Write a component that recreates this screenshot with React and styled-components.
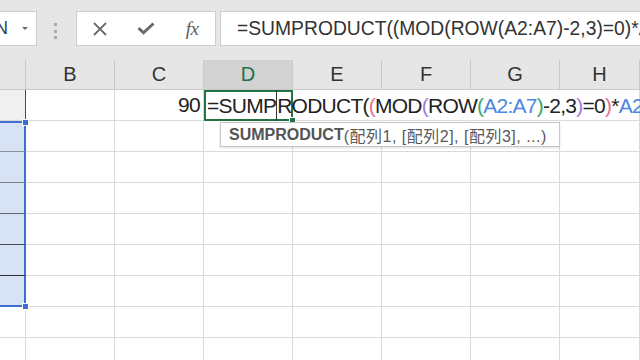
import React from "react";
import styled, { createGlobalStyle } from "styled-components";

const GlobalStyle = createGlobalStyle`
  html, body {
    margin: 0;
    padding: 0;
    width: 640px;
    height: 360px;
    overflow: hidden;
    background: #ffffff;
  }
  body {
    font-family: "Liberation Sans", "Noto Sans CJK JP", sans-serif;
  }
`;

const Page = styled.div`
  width: 640px;
  height: 360px;
  overflow: hidden;
  display: flex;
  flex-direction: column;
`;

/* ---------- formula toolbar ---------- */

const Toolbar = styled.div`
  height: 60px;
  flex-shrink: 0;
  box-sizing: border-box;
  padding-top: 11px;
  background: #e6e6e6;
  display: flex;
  align-items: flex-start;
`;

const Box = styled.div`
  height: 35px;
  box-sizing: border-box;
  background: #ffffff;
  border: 1px solid #cdcdcd;
  display: flex;
  align-items: center;
  flex-shrink: 0;
`;

const NameBox = styled(Box)`
  width: 37px;
  border-left: none;
  overflow: hidden;
  justify-content: space-between;
  padding-right: 8px;
`;

const NameText = styled.span`
  margin-left: -5px;
  font-size: 18px;
  color: #2a3f66;
`;

const DropArrow = styled.span`
  width: 0;
  height: 0;
  border-left: 3px solid transparent;
  border-right: 3px solid transparent;
  border-top: 3px solid #6a6a6a;
`;

const Grip = styled.div`
  width: 3px;
  margin: 12px 19px 0 17px;
  display: flex;
  flex-direction: column;
  gap: 3.5px;
`;

const GripDot = styled.span`
  width: 3px;
  height: 3px;
  background: #a9a9a9;
`;

const ButtonGroup = styled(Box)`
  width: 140px;
`;

const ToolButton = styled.div`
  width: 46px;
  height: 100%;
  display: flex;
  align-items: center;
  justify-content: center;
  color: #6a6a6a;
`;

const FxText = styled.span`
  font-family: "Liberation Serif", serif;
  font-style: italic;
  font-size: 19px;
  color: #5c5c5c;
  letter-spacing: -0.5px;
`;

const FormulaBox = styled(Box)`
  margin-left: 4px;
  width: 440px;
  border-right: none;
  padding-left: 16px;
  overflow: hidden;
  white-space: nowrap;
  font-size: 19.3px;
  color: #333333;
`;

/* ---------- sheet ---------- */

const Sheet = styled.div`
  display: grid;
  grid-template-columns: 26px repeat(6, 89px) 1fr;
  grid-template-rows: 30px;
  grid-auto-rows: 31px;
`;

const HeaderCell = styled.div`
  box-sizing: border-box;
  background: ${(p) => (p.$active ? "#d2d2d2" : "#e6e6e6")};
  color: ${(p) => (p.$active ? "#217346" : "#333333")};
  border-right: 1px solid #c9c9c9;
  border-bottom: 1px solid #c9c9c9;
  font-size: 20px;
  display: flex;
  align-items: center;
  justify-content: center;
`;

const Cell = styled.div`
  box-sizing: border-box;
  background: #ffffff;
  border-right: 1px solid ${(p) => (p.$noLine ? "#ffffff" : "#dadada")};
  border-bottom: 1px solid #dadada;
  display: flex;
  align-items: center;
  justify-content: ${(p) => (p.$right ? "flex-end" : "flex-start")};
  padding: 0 3px;
  font-size: 21px;
  letter-spacing: -0.7px;
  color: #222222;
`;

const CornerCell = styled(Cell)`
  background: #f0f0f0;
  border-right: 1px solid #4a4a4a;
`;

const RangeCell = styled.div`
  position: relative;
  z-index: 1;
  box-sizing: border-box;
  background: #d7e2f4;
  border-right: 2px solid #3d6fd1;
  border-top: ${(p) => (p.$first ? "2px solid #3d6fd1" : "none")};
  border-bottom: ${(p) => (p.$last ? "2px solid #3d6fd1" : `1px solid ${p.$shade}`)};
`;

const Handle = styled.span`
  position: absolute;
  right: -5px;
  ${(p) => (p.$top ? "top: -4px;" : "bottom: -5px;")}
  width: 5px;
  height: 5px;
  background: ${(p) => p.$color || "#3d6fd1"};
  border: 1px solid #ffffff;
`;

const ActiveCell = styled.div`
  position: relative;
  z-index: 3;
  box-sizing: border-box;
  background: #ffffff;
  border: 2px solid #217346;
  display: flex;
  align-items: center;
  padding-left: 1px;
  white-space: nowrap;
  font-size: 21px;
  letter-spacing: -0.75px;
  color: #222222;
`;

const Token = styled.span`
  flex-shrink: 0;
  color: ${(p) => p.$color || "#222222"};
`;

const TextCaret = styled.span`
  flex-shrink: 0;
  align-self: stretch;
  width: 1px;
  margin: -2px 0;
  background: #333333;
`;

const Tooltip = styled.div`
  position: absolute;
  left: 14px;
  top: 30px;
  width: 340px;
  height: 25px;
  box-sizing: border-box;
  padding-left: 8px;
  background: #ffffff;
  border: 1px solid #c6c6c6;
  box-shadow: 0 1px 2px rgba(0, 0, 0, 0.12);
  display: flex;
  align-items: center;
  font-size: 16px;
  letter-spacing: 0;
  color: #595959;
`;

const TipName = styled.b`
  font-weight: bold;
  color: #545454;
`;

const TipArgs = styled.span`
  letter-spacing: 0.5px;
`;

const XIcon = () => (
  <svg width="14" height="14" viewBox="0 0 14 14">
    <path d="M1 1L13 13M13 1L1 13" stroke="currentColor" strokeWidth="1.8" fill="none" />
  </svg>
);

const CheckIcon = () => (
  <svg width="18" height="13" viewBox="0 0 18 13">
    <path d="M1.5 6L6.5 10.8L16.5 1.5" stroke="currentColor" strokeWidth="3" fill="none" />
  </svg>
);

const columns = ["", "B", "C", "D", "E", "F", "G", "H"];
const rangeShades = ["#8b9099", "#7c828b", "#5f6670", "#434950", "#2d3035", ""];

const formula = [
  ["(", null],
  ["(", "#e5708c"],
  ["MOD", null],
  ["(", "#a77ad8"],
  ["ROW", null],
  ["(", "#3aa56b"],
  ["A2:A7", "#4a86e0"],
  [")", "#3aa56b"],
  ["-2,3", null],
  [")", "#a77ad8"],
  ["=0", null],
  [")", "#e5708c"],
  ["*", null],
  ["A2:", "#4a86e0"],
];

export default function App() {
  const rows = [];
  for (let r = 2; r <= 9; r++) {
    const idx = r - 2;
    rows.push(
      idx < 6 ? (
        <RangeCell key={`a${r}`} $first={idx === 0} $last={idx === 5} $shade={rangeShades[idx]}>
          {idx === 0 && <Handle $top />}
          {idx === 5 && <Handle />}
        </RangeCell>
      ) : (
        <Cell key={`a${r}`} />
      )
    );
    for (let c = 1; c < columns.length; c++) {
      rows.push(<Cell key={`${columns[c]}${r}`} />);
    }
  }

  return (
    <Page>
      <GlobalStyle />
      <Toolbar>
        <NameBox>
          <NameText>N</NameText>
          <DropArrow />
        </NameBox>
        <Grip>
          <GripDot />
          <GripDot />
          <GripDot />
        </Grip>
        <ButtonGroup>
          <ToolButton>
            <XIcon />
          </ToolButton>
          <ToolButton>
            <CheckIcon />
          </ToolButton>
          <ToolButton>
            <FxText>fx</FxText>
          </ToolButton>
        </ButtonGroup>
        <FormulaBox>=SUMPRODUCT((MOD(ROW(A2:A7)-2,3)=0)*A2:A7)</FormulaBox>
      </Toolbar>

      <Sheet>
        {columns.map((col) => (
          <HeaderCell key={`h${col}`} $active={col === "D"}>
            {col}
          </HeaderCell>
        ))}

        <CornerCell />
        <Cell />
        <Cell $right>90</Cell>
        <ActiveCell>
          <Token>=SUMP</Token>
          <TextCaret />
          <Token>RODUCT</Token>
          {formula.map(([text, color], i) => (
            <Token key={i} $color={color}>
              {text}
            </Token>
          ))}
          <Handle $color="#217346" />
          <Tooltip>
            <TipName>SUMPRODUCT</TipName>
            <TipArgs>(配列1, [配列2], [配列3], ...)</TipArgs>
          </Tooltip>
        </ActiveCell>
        <Cell $noLine />
        <Cell $noLine />
        <Cell $noLine />
        <Cell />

        {rows}
      </Sheet>
    </Page>
  );
}
